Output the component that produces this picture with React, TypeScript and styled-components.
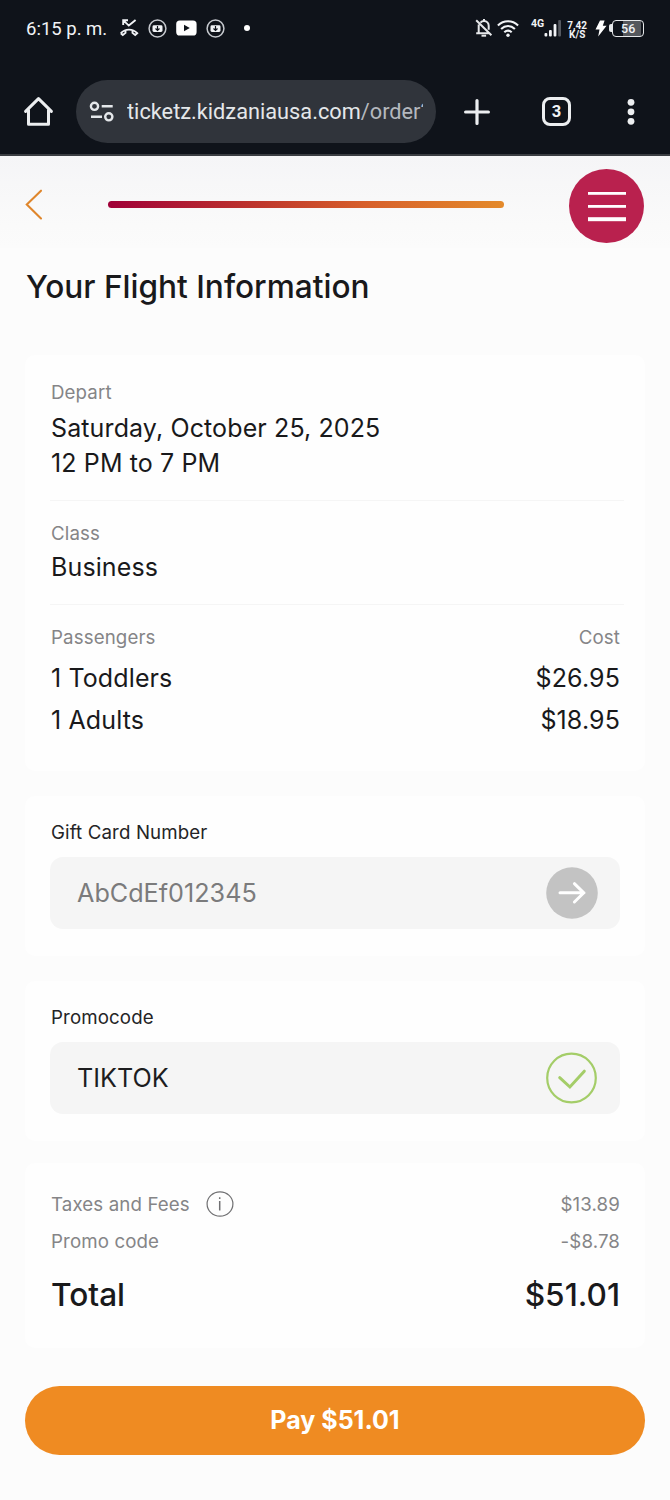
import React from "react";
import styled, { createGlobalStyle } from "styled-components";

const GlobalStyle = createGlobalStyle`
  * { box-sizing: border-box; }
  html, body { margin: 0; background: #fcfcfc; }
  body { font-family: Inter, "Liberation Sans", sans-serif; color: #19191b; }
  svg { display: block; flex: none; }
`;

const Screen = styled.div`
  width: 670px;
  height: 1500px;
  background: #fcfcfc;
  overflow: hidden;
`;

const BrowserChrome = styled.header`
  height: 156px;
  background: #0f131a;
  border-bottom: 2px solid #3a3d42;
  color: #f1f3f6;
  font-family: Roboto, "Liberation Sans", sans-serif;
`;

const StatusBar = styled.div`
  height: 80px;
  padding: 4px 24px 28px 26px;
  display: flex;
  align-items: center;
`;

const Clock = styled.span`
  width: 93px;
  padding-top: 2px;
  font-size: 18.5px;
  line-height: 24px;
  white-space: nowrap;
`;

const StatusSlot = styled.span<{ $gap?: number }>`
  display: flex;
  margin-left: ${(p) => p.$gap ?? 0}px;
`;

const NetworkType = styled.span`
  align-self: flex-start;
  margin: 14px 0 0 12px;
  font-size: 10.5px;
  line-height: 12px;
  font-weight: 700;
`;

const DataRate = styled.span`
  width: 22px;
  margin-left: 4px;
  padding-top: 4px;
  display: flex;
  flex-direction: column;
  align-items: center;
  font-size: 10px;
  line-height: 9.5px;
  font-weight: 700;
`;

const Battery = styled.span`
  display: flex;
  align-items: center;
  margin-left: 2px;
`;

const BatteryTip = styled.span`
  width: 3px;
  height: 8px;
  border-radius: 2px 0 0 2px;
  background: #e6e8ea;
`;

const BatteryBody = styled.span`
  width: 32px;
  height: 17px;
  border: 1.5px solid #e6e8ea;
  border-radius: 4px;
  background: linear-gradient(90deg, #0f131a 0 34%, #55585d 34% 92%, #0f131a 92%);
  font-size: 12.5px;
  font-weight: 500;
  line-height: 15px;
  text-align: center;
`;

const Toolbar = styled.div`
  height: 63px;
  padding-left: 23px;
  display: flex;
  align-items: center;
`;

const AddressPill = styled.div`
  width: 360px;
  height: 63px;
  margin: 0 28px 0 22px;
  padding: 0 13px;
  border-radius: 32px;
  background: #30343b;
  display: flex;
  align-items: center;
  gap: 12px;
`;

const Address = styled.div`
  flex: 1;
  overflow: hidden;
  white-space: nowrap;
  font-size: 21.75px;
  line-height: 32px;
  color: #e4e7ea;
`;

const AddressPath = styled.span`
  color: #b4b8be;
`;

const TabCount = styled.div`
  width: 29px;
  height: 29px;
  margin: 0 56px 0 52px;
  border: 3px solid #eceef0;
  border-radius: 8px;
  font-size: 16.5px;
  font-weight: 700;
  line-height: 23px;
  text-align: center;
`;

const PageHeader = styled.div`
  height: 92px;
  padding: 1px 26px 0 25px;
  display: flex;
  align-items: center;
  background: linear-gradient(#f5f5f7, #fafafa 75%, #fbfbfb);
`;

const Progress = styled.div`
  width: 397px;
  height: 7px;
  margin: 4px 65px 0 65px;
  border-radius: 4px;
  background: linear-gradient(90deg, #a00038, #c0392c 40%, #d75f2a 65%, #e48a2b);
`;

const MenuButton = styled.button`
  width: 75px;
  height: 74px;
  padding: 0;
  border: 0;
  border-radius: 50%;
  background: #b9214e;
  margin-top: 7px;
  display: flex;
  align-items: center;
  justify-content: center;
`;

const BackLink = styled.span`
  padding-top: 4px;
`;

const Content = styled.main`
  padding: 0 25px;
`;

const Title = styled.h1`
  margin: 0;
  height: 107px;
  padding: 19px 0 0 1px;
  font-size: 31.6px;
  font-weight: 450;
  line-height: 40px;
`;

const Card = styled.section<{ $height: number; $gap: number; $top: number }>`
  height: ${(p) => p.$height}px;
  margin-bottom: ${(p) => p.$gap}px;
  padding: ${(p) => p.$top}px 25px 0;
  border-radius: 10px;
  background: #fefefe;
`;

const Section = styled.div<{ $height: number }>`
  height: ${(p) => p.$height}px;
  margin-bottom: 21px;
  margin-right: -4px;
  padding-left: 1px;
  border-bottom: 1px solid #f5f5f5;
`;

const Row = styled.div<{ $height: number; $gap?: number }>`
  height: ${(p) => p.$height}px;
  margin-bottom: ${(p) => p.$gap ?? 0}px;
  padding-left: 1px;
  display: flex;
  align-items: center;
  justify-content: space-between;
`;

const Label = styled.div<{ $dark?: boolean }>`
  display: flex;
  align-items: center;
  font-size: 18.7px;
  line-height: 24px;
  letter-spacing: 0.12px;
  color: ${(p) => (p.$dark ? "#242426" : "#858587")};
`;

const FieldLabel = styled(Label)`
  padding-left: 1px;
  margin-bottom: 12px;
`;

const Value = styled.div`
  font-size: 25px;
  line-height: 35.5px;
  letter-spacing: 0.12px;
`;

const ValueBlock = styled.div<{ $gap: number }>`
  margin-top: ${(p) => p.$gap}px;
`;

const Field = styled.div`
  height: 72px;
  padding: 0 22px 0 27px;
  border-radius: 13px;
  background: #f5f5f5;
  display: flex;
  align-items: center;
  justify-content: space-between;
`;

const FieldText = styled.span<{ $placeholder?: boolean }>`
  font-size: 25.2px;
  color: ${(p) => (p.$placeholder ? "#7b7b7c" : "#1d1d1f")};
`;

const InfoSlot = styled.span`
  margin: -2px 0 0 16.5px;
`;

const Total = styled.div`
  font-size: 31.6px;
  line-height: 40px;
  font-weight: 450;
`;

const PayButton = styled.button`
  width: 100%;
  height: 69px;
  border: 0;
  padding: 0;
  border-radius: 35px;
  background: #ef8b22;
  color: #fff;
  font: 700 25px/69px Inter, "Liberation Sans", sans-serif;
`;

const MissedCall = () => (
  <svg width="20" height="20" viewBox="0 0 20 20" fill="none" stroke="#f1f3f6" strokeWidth="1.9">
    <path d="M4.2 7V2.2H9M4.4 2.4l5.4 5.2L16.6 2" />
    <path d="M1.8 15.2C6.4 10.4 13.6 10.4 18.2 15.2l-2 1.8-2.7-2.1v-2.6M1.8 15.2l2 1.8 2.7-2.1v-2.6" />
  </svg>
);

const CircledApp = () => (
  <svg width="19" height="19" viewBox="0 0 19 19">
    <circle cx="9.5" cy="9.5" r="8.4" fill="none" stroke="#c6c9ce" strokeWidth="1.5" />
    <rect x="4.5" y="6.3" width="10" height="6.6" rx="1.4" fill="#f1f3f6" />
    <path d="M9.5 7v4M7.5 9.5l2 2 2-2" fill="none" stroke="#0f131a" strokeWidth="1.2" />
  </svg>
);

const VideoApp = () => (
  <svg width="21" height="16" viewBox="0 0 21 16">
    <rect x="0.2" y="0.5" width="20.4" height="15" rx="3.6" fill="#fff" />
    <path d="M8 4.8v6.4l5.8-3.2z" fill="#0f131a" />
  </svg>
);

const BellOff = () => (
  <svg width="18" height="20" viewBox="0 0 18 20" fill="none" stroke="#e6e8ea" strokeWidth="2">
    <path d="M5.5 4.7C6.3 3.7 7.6 3 9 3c2.8 0 4.7 2 4.7 4.8v4M3.7 6.5v7.7M1.2 15.2h13M9 .9v2M1.2 2.3l15.2 14.9" />
    <path d="M6.5 17.7h4.6" />
  </svg>
);

const WifiSignal = () => (
  <svg width="22" height="19" viewBox="0 0 22 19" fill="none" stroke="#f1f3f6" strokeWidth="2.1">
    <path d="M.9 6.5c5.8-5.6 14.4-5.6 20.2 0M4.1 10c4.1-4 9.7-4 13.8 0M7.3 13.3c2.3-2.2 5.1-2.2 7.4 0" />
    <circle cx="11" cy="16.3" r="1.7" fill="#f1f3f6" stroke="none" />
  </svg>
);

const CellBars = () => (
  <svg width="18" height="18" viewBox="0 0 18 18" fill="#f1f3f6">
    <rect x="0.5" y="14" width="2.8" height="3.5" rx="1" />
    <rect x="5" y="11" width="2.8" height="6.5" rx="1" />
    <rect x="9.6" y="5" width="2.8" height="12.5" rx="1" />
    <rect x="14.2" y="1" width="2.8" height="16.5" rx="1" fill="#555960" />
  </svg>
);

const Bolt = () => (
  <svg width="12" height="17" viewBox="0 0 12 17">
    <path d="M5 .5h4.6L7.8 5.8h3.8L3.2 16.5l1.3-7H.5z" fill="#fff" />
  </svg>
);

const HomeIcon = () => (
  <svg width="31" height="31" viewBox="0 0 31 31" fill="none" stroke="#eceef0" strokeWidth="3" strokeLinejoin="round" strokeLinecap="round">
    <path d="M2.6 15.4 15.5 2.6l12.9 12.8M5.5 14v14.2h20V14" />
  </svg>
);

const TuneIcon = () => (
  <svg width="26" height="22" viewBox="0 0 26 22" fill="none" stroke="#e4e7ea" strokeWidth="2.4">
    <circle cx="5.5" cy="5.3" r="3.6" />
    <circle cx="19.8" cy="15.8" r="3.6" />
    <path d="M12.7 5.3h11M2 15.8h11" />
  </svg>
);

const PlusIcon = () => (
  <svg width="26" height="26" viewBox="0 0 26 26" stroke="#eceef0" strokeWidth="3.2" strokeLinecap="round">
    <path d="M13 1.6v22.8M1.6 13h22.8" />
  </svg>
);

const MoreIcon = () => (
  <svg width="8" height="28" viewBox="0 0 8 28" fill="#eceef0">
    <circle cx="4" cy="4.3" r="3.4" />
    <circle cx="4" cy="13.8" r="3.4" />
    <circle cx="4" cy="23.3" r="3.4" />
  </svg>
);

const ChevronBack = () => (
  <svg width="18" height="31" viewBox="0 0 18 31" fill="none" stroke="#df862c" strokeWidth="2.1" strokeLinecap="round">
    <path d="M16 1.7 1.8 15.6 16 29.4" />
  </svg>
);

const MenuLines = () => (
  <svg width="38" height="31" viewBox="0 0 38 31" fill="#fff">
    <rect y="1" width="38" height="2.8" />
    <rect y="14" width="38" height="2.8" />
    <rect y="26.2" width="38" height="4" />
  </svg>
);

const SubmitArrow = () => (
  <svg width="52" height="52" viewBox="0 0 52 52" fill="none">
    <circle cx="26" cy="26" r="25.8" fill="#c3c3c3" />
    <path d="M14 25.8h24M28.4 16.7l9.4 9.1-9.4 9.2" stroke="#fff" strokeWidth="3" strokeLinecap="round" strokeLinejoin="round" />
  </svg>
);

const ValidCheck = () => (
  <svg width="52" height="52" viewBox="0 0 52 52" fill="none" stroke="#a4cd68">
    <circle cx="25.5" cy="26" r="24.3" strokeWidth="2.2" />
    <path d="M13.7 25.7 23.9 35 38.3 19.2" strokeWidth="3" strokeLinecap="round" />
  </svg>
);

const InfoIcon = () => (
  <svg width="28" height="26" viewBox="0 0 28 26" fill="none" stroke="#707072">
    <ellipse cx="14" cy="13" rx="12.9" ry="12.2" strokeWidth="1.2" />
    <path d="M13.7 10v9.5M13.7 6.3v1.7" strokeWidth="1.5" />
  </svg>
);

const passengers = [
  { name: "1 Toddlers", cost: "$26.95" },
  { name: "1 Adults", cost: "$18.95" },
];

export default function App() {
  return (
    <Screen>
      <GlobalStyle />
      <BrowserChrome>
        <StatusBar>
          <Clock>6:15 p. m.</Clock>
          <StatusSlot><MissedCall /></StatusSlot>
          <StatusSlot $gap={9}><CircledApp /></StatusSlot>
          <StatusSlot $gap={9}><VideoApp /></StatusSlot>
          <StatusSlot $gap={9}><CircledApp /></StatusSlot>
          <StatusSlot $gap={19}>
            <svg width="6" height="6"><circle cx="3" cy="3" r="3" fill="#fff" /></svg>
          </StatusSlot>
          <StatusSlot $gap={225}><BellOff /></StatusSlot>
          <StatusSlot $gap={4}><WifiSignal /></StatusSlot>
          <NetworkType>4G</NetworkType>
          <StatusSlot><CellBars /></StatusSlot>
          <DataRate><span>7,42</span><span>K/S</span></DataRate>
          <StatusSlot $gap={7}><Bolt /></StatusSlot>
          <Battery><BatteryTip /><BatteryBody>56</BatteryBody></Battery>
        </StatusBar>
        <Toolbar>
          <HomeIcon />
          <AddressPill>
            <TuneIcon />
            <Address>ticketz.kidzaniausa.com<AddressPath>/order?</AddressPath></Address>
          </AddressPill>
          <PlusIcon />
          <TabCount>3</TabCount>
          <MoreIcon />
        </Toolbar>
      </BrowserChrome>

      <PageHeader>
        <BackLink><ChevronBack /></BackLink>
        <Progress />
        <MenuButton aria-label="Menu"><MenuLines /></MenuButton>
      </PageHeader>

      <Content>
        <Title>Your Flight Information</Title>

        <Card $height={416} $gap={25} $top={26}>
          <Section $height={120}>
            <Label>Depart</Label>
            <ValueBlock $gap={5.5}>
              <Value>Saturday, October 25, 2025</Value>
              <Value>12 PM to 7 PM</Value>
            </ValueBlock>
          </Section>
          <Section $height={83}>
            <Label>Class</Label>
            <ValueBlock $gap={4}><Value>Business</Value></ValueBlock>
          </Section>
          <Row $height={24} $gap={8}>
            <Label>Passengers</Label>
            <Label>Cost</Label>
          </Row>
          {passengers.map((p) => (
            <Row $height={42} key={p.name}>
              <Value>{p.name}</Value>
              <Value>{p.cost}</Value>
            </Row>
          ))}
        </Card>

        <Card $height={160} $gap={25} $top={25}>
          <FieldLabel $dark>Gift Card Number</FieldLabel>
          <Field>
            <FieldText $placeholder>AbCdEf012345</FieldText>
            <SubmitArrow />
          </Field>
        </Card>

        <Card $height={160} $gap={22} $top={25}>
          <FieldLabel $dark>Promocode</FieldLabel>
          <Field>
            <FieldText>TIKTOK</FieldText>
            <ValidCheck />
          </Field>
        </Card>

        <Card $height={185} $gap={37.5} $top={23}>
          <Row $height={37}>
            <Label>Taxes and Fees<InfoSlot><InfoIcon /></InfoSlot></Label>
            <Label>$13.89</Label>
          </Row>
          <Row $height={37}>
            <Label>Promo code</Label>
            <Label>-$8.78</Label>
          </Row>
          <Row $height={70}>
            <Total>Total</Total>
            <Total>$51.01</Total>
          </Row>
        </Card>

        <PayButton>Pay $51.01</PayButton>
      </Content>
    </Screen>
  );
}
